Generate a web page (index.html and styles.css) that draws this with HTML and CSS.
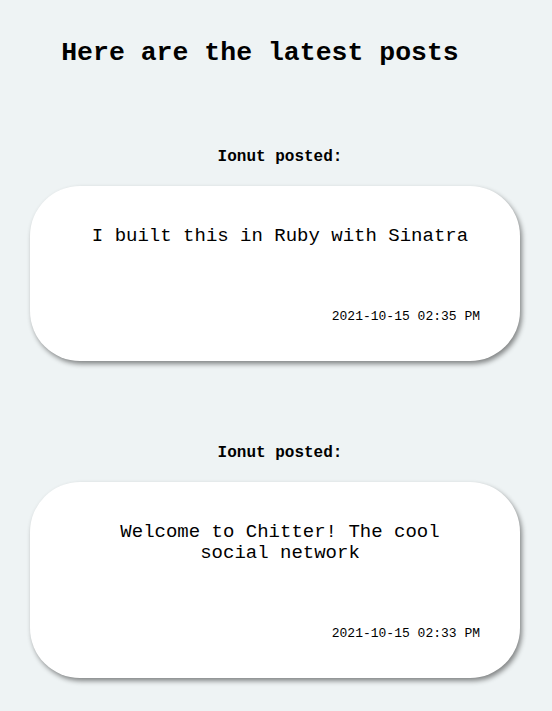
FILE: index.html
```html
<!DOCTYPE html>
<html lang="en">
<head>
<meta charset="utf-8">
<title>Chitter</title>
<link rel="stylesheet" href="styles.css">
</head>
<body>
<main class="page">
  <h1 class="title">Here are the latest posts</h1>
  <section class="post">
    <p class="author">Ionut posted:</p>
    <div class="card">
      <p class="content">I built this in Ruby with Sinatra</p>
      <p class="date">2021-10-15 02:35 PM</p>
    </div>
  </section>
  <section class="post">
    <p class="author">Ionut posted:</p>
    <div class="card">
      <p class="content">Welcome to Chitter! The cool social network</p>
      <p class="date">2021-10-15 02:33 PM</p>
    </div>
  </section>
</main>
</body>
</html>
```

FILE: styles.css
```css
html, body {
  margin: 0;
  background: #eef3f4;
}
body {
  font-family: "Liberation Mono", "Courier New", monospace;
  color: #000;
}
.page {
  padding-top: 38px;
  padding-bottom: 40px;
}
.title {
  margin: 0;
  font-size: 26.5px;
  line-height: 30px;
  font-weight: bold;
  text-align: center;
  padding-right: 32px;
}
.post {
  margin-top: 80px;
}
.post + .post {
  margin-top: 83px;
}
.author {
  margin: 0;
  font-size: 16px;
  line-height: 18px;
  font-weight: bold;
  text-align: center;
  padding-left: 8px;
}
.card {
  margin: 20px 0 0 30px;
  width: 490px;
  box-sizing: border-box;
  background: #fff;
  border-radius: 50px;
  box-shadow: 2px 3px 5px rgba(0, 0, 0, 0.45);
  padding: 40px 40px 37px 50px;
}
.content {
  margin: 0;
  padding: 0 5px;
  font-size: 19px;
  line-height: 21.5px;
  text-align: center;
}
.date {
  margin: 61px 0 0;
  font-size: 13px;
  line-height: 15px;
  text-align: right;
}
```
